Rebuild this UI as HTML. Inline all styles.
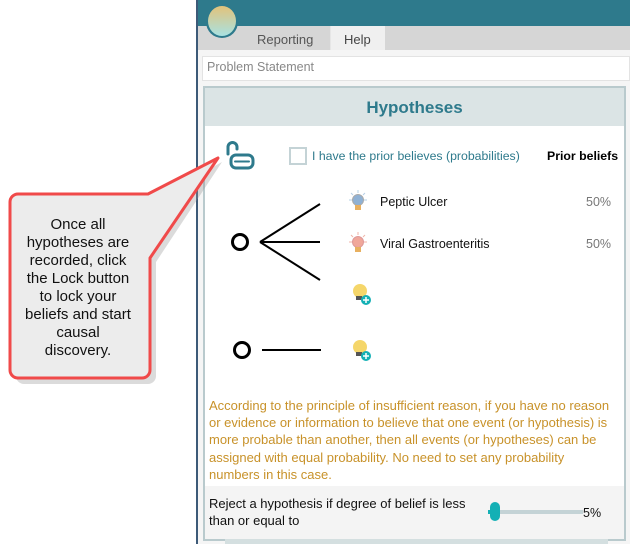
<!DOCTYPE html>
<html><head><meta charset="utf-8"><style>
*{margin:0;padding:0;box-sizing:border-box}
body{width:630px;height:544px;position:relative;background:#fff;font-family:"Liberation Sans",sans-serif;overflow:hidden}
.abs{position:absolute}
.t{font-size:12.5px;white-space:nowrap}
</style></head><body>
<div class="abs" style="left:196px;top:0;width:2px;height:544px;background:#3d5a78"></div>
<div class="abs" style="left:198px;top:0;width:432px;height:26px;background:#2e7a8c"></div>
<div class="abs" style="left:198px;top:26px;width:432px;height:24px;background:#d6d6d6"></div>
<div class="abs" style="left:330px;top:26px;width:55px;height:24px;background:#f0f0f0;border-left:1px solid #e6e6e6"></div>
<div class="abs" style="left:206px;top:6px;width:32px;height:32px;border-radius:50%;background:#2e7a8c"></div>
<div class="abs" style="left:208px;top:6px;width:28px;height:30px;border-radius:50%;background:linear-gradient(#e2c27a,#a9e2e2)"></div>
<div class="abs t" style="left:257px;top:32px;font-size:13px;color:#555">Reporting</div>
<div class="abs t" style="left:344px;top:32px;font-size:13px;color:#444">Help</div>
<div class="abs" style="left:198px;top:50px;width:432px;height:494px;background:#f5f5f5"></div>
<div class="abs" style="left:202px;top:56px;width:428px;height:25px;background:#fff;border:1px solid #e3e3e3"></div>
<div class="abs t" style="left:207px;top:60px;color:#888">Problem Statement</div>
<div class="abs" style="left:203px;top:86px;width:423px;height:455px;background:#fff;border:2px solid #b9cacd"></div>
<div class="abs" style="left:205px;top:88px;width:419px;height:38px;background:#dbe4e5"></div>
<div class="abs t" style="left:205px;top:98px;width:419px;text-align:center;font-size:17px;font-weight:bold;color:#2e7a8c">Hypotheses</div>
<div class="abs" style="left:225px;top:537px;width:383px;height:7px;background:#d4dfe0"></div>
<div class="abs" style="left:289px;top:147px;width:18px;height:18px;border:2px solid #c4d3d6;background:#fff"></div>
<div class="abs t" style="left:312px;top:149px;color:#2e7a8c;font-size:12.3px">I have the prior believes (probabilities)</div>
<div class="abs t" style="left:547px;top:149px;color:#000;font-weight:bold;font-size:12.3px">Prior beliefs</div>
<svg class="abs" style="left:0;top:0" width="630" height="544">
<g fill="none" stroke="#2e7a8c" stroke-width="3" stroke-linecap="round">
<path d="M228 154 V147 a4.5 4.5 0 0 1 9 0 V149"/>
<rect x="231" y="155" width="22" height="13" rx="5"/>
<path d="M235 161.5 H249" stroke-width="2"/>
</g>
<g stroke="#000" stroke-width="2" fill="none">
<circle cx="240" cy="242" r="7.5" stroke-width="3"/>
<path d="M260 242 L320 204 M260 242 H320 M260 242 L320 280"/>
<circle cx="242" cy="350" r="7.5" stroke-width="3"/>
<path d="M262 350 H321"/>
</g>
<g>
<circle cx="358" cy="200" r="5.5" fill="#8fb1d4" stroke="#aaa"/><rect x="355" y="205" width="6" height="5" fill="#e8b060"/>
<g stroke="#b6d0e6" stroke-width="1"><path d="M358 190v3M349 200h3M364 200h3M351 193l2 2M365 193l-2 2"/></g>
<circle cx="358" cy="242" r="5.5" fill="#f0a79a" stroke="#d99"/><rect x="355" y="247" width="6" height="5" fill="#e8b060"/>
<g stroke="#f0b5a8" stroke-width="1"><path d="M358 232v3M349 242h3M364 242h3M351 235l2 2M365 235l-2 2"/></g>
<circle cx="360" cy="291" r="7" fill="#f5d66a"/><rect x="356" y="296" width="6" height="4" fill="#555"/>
<circle cx="366" cy="300" r="5" fill="#14b0b5"/><path d="M363 300h6M366 297v6" stroke="#fff" stroke-width="1.5"/>
<circle cx="360" cy="347" r="7" fill="#f5d66a"/><rect x="356" y="352" width="6" height="4" fill="#555"/>
<circle cx="366" cy="356" r="5" fill="#14b0b5"/><path d="M363 356h6M366 353v6" stroke="#fff" stroke-width="1.5"/>
</g>
<path d="M22 196 H148 L218 158 L152 258 V372 a8 8 0 0 1 -8 8 H20 a8 8 0 0 1 -8 -8 V204 a8 8 0 0 1 8 -8 Z" fill="#999" opacity=".35" transform="translate(4,4)"/>
<path d="M20 194 H148 L218 158 L150 258 V370 a8 8 0 0 1 -8 8 H18 a8 8 0 0 1 -8 -8 V202 a8 8 0 0 1 8 -8 Z" fill="#ececec" stroke="#f04a4a" stroke-width="3" stroke-linejoin="round"/>
</svg>
<div class="abs" style="left:12px;top:216px;width:132px;text-align:center;font-family:'Liberation Sans',sans-serif;font-size:15px;line-height:18px;color:#111">Once all<br>hypotheses are<br>recorded, click<br>the Lock button<br>to lock your<br>beliefs and start<br>causal<br>discovery.</div>
<div class="abs t" style="left:380px;top:195px;color:#111">Peptic Ulcer</div>
<div class="abs t" style="left:380px;top:237px;color:#111">Viral Gastroenteritis</div>
<div class="abs t" style="left:586px;top:195px;color:#777">50%</div>
<div class="abs t" style="left:586px;top:237px;color:#777">50%</div>
<div class="abs" style="left:209px;top:397px;width:415px;white-space:nowrap;font-size:13px;line-height:17.2px;color:#c8922a">According to the principle of insufficient reason, if you have no reason<br>or evidence or information to believe that one event (or hypothesis) is<br>more probable than another, then all events (or hypotheses) can be<br>assigned with equal probability. No need to set any probability<br>numbers in this case.</div>
<div class="abs" style="left:205px;top:486px;width:419px;height:53px;background:#f4f4f4"></div>
<div class="abs" style="left:209px;top:495px;white-space:nowrap;font-size:13px;line-height:17px;color:#111">Reject a hypothesis if degree of belief is less<br>than or equal to</div>
<div class="abs" style="left:488px;top:510px;width:95px;height:4px;background:#c4d3d6"></div>
<div class="abs" style="left:488px;top:510px;width:5px;height:4px;background:#14b0b5"></div>
<div class="abs" style="left:490px;top:502px;width:10px;height:19px;border-radius:5px;background:#14b0b5"></div>
<div class="abs t" style="left:583px;top:506px;color:#111">5%</div>
</body></html>
